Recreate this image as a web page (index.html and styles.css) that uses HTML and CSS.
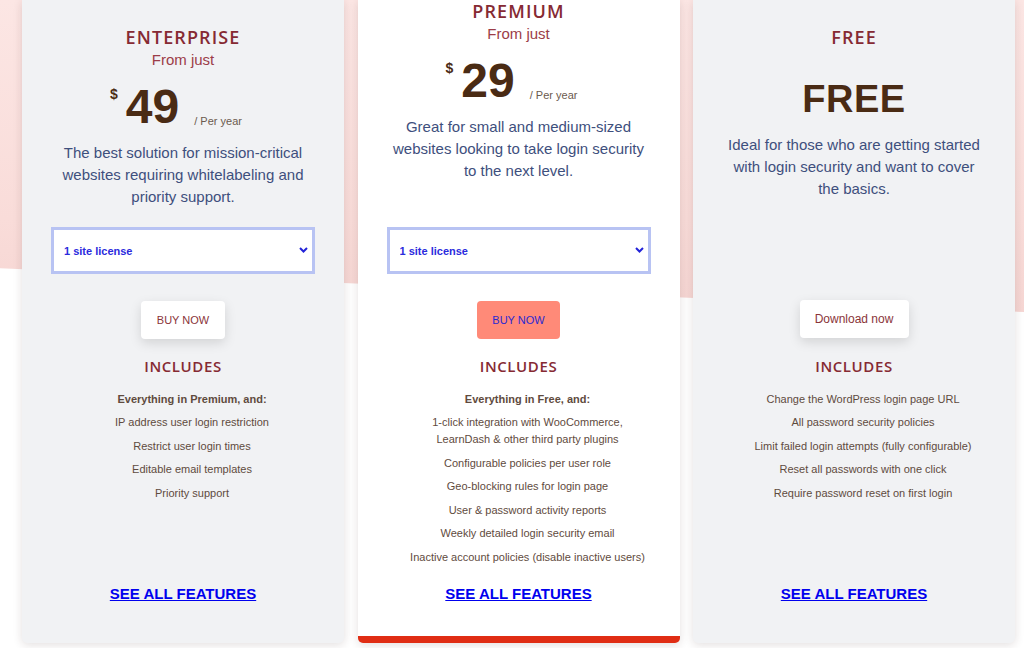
FILE: index.html
```html
<!DOCTYPE html>
<html lang="en">
<head>
<meta charset="utf-8">
<title>Pricing</title>
<link rel="stylesheet" href="styles.css">
</head>
<body>
<div class="pricing">
  <div class="card">
    <div class="head">
      <h2 class="plan">ENTERPRISE</h2>
      <div class="from">From just</div>
      <div class="price"><span class="cur">$</span><span class="amount">49</span><span class="per">/ Per year</span></div>
      <p class="desc">The best solution for mission-critical websites requiring whitelabeling and priority support.</p>
    </div>
    <div class="license">
      <div class="select-wrap">
        <select class="select"><option>1 site license</option></select>
        <svg class="chev" width="9" height="6" viewBox="0 0 9 6"><path d="M1 1l3.5 3.5L8 1" fill="none" stroke="#2323d8" stroke-width="2"/></svg>
      </div>
    </div>
    <div class="btn-row"><a class="btn">BUY NOW</a></div>
    <h3 class="includes">INCLUDES</h3>
    <ul class="features">
      <li class="lead">Everything in Premium, and:</li>
      <li>IP address user login restriction</li>
      <li>Restrict user login times</li>
      <li>Editable email templates</li>
      <li>Priority support</li>
    </ul>
    <div class="foot"><a class="all" href="#">SEE ALL FEATURES</a></div>
  </div>

  <div class="card featured">
    <div class="head">
      <h2 class="plan">PREMIUM</h2>
      <div class="from">From just</div>
      <div class="price"><span class="cur">$</span><span class="amount">29</span><span class="per">/ Per year</span></div>
      <p class="desc">Great for small and medium-sized websites looking to take login security to the next level.</p>
    </div>
    <div class="license">
      <div class="select-wrap">
        <select class="select"><option>1 site license</option></select>
        <svg class="chev" width="9" height="6" viewBox="0 0 9 6"><path d="M1 1l3.5 3.5L8 1" fill="none" stroke="#2323d8" stroke-width="2"/></svg>
      </div>
    </div>
    <div class="btn-row"><a class="btn btn-hot">BUY NOW</a></div>
    <h3 class="includes">INCLUDES</h3>
    <ul class="features">
      <li class="lead">Everything in Free, and:</li>
      <li>1-click integration with WooCommerce, LearnDash &amp; other third party plugins</li>
      <li>Configurable policies per user role</li>
      <li>Geo-blocking rules for login page</li>
      <li>User &amp; password activity reports</li>
      <li>Weekly detailed login security email</li>
      <li>Inactive account policies (disable inactive users)</li>
    </ul>
    <div class="foot"><a class="all" href="#">SEE ALL FEATURES</a></div>
  </div>

  <div class="card">
    <div class="head">
      <h2 class="plan">FREE</h2>
      <div class="free">FREE</div>
      <p class="desc desc-free">Ideal for those who are getting started with login security and want to cover the basics.</p>
    </div>
    <div class="license"></div>
    <div class="btn-row"><a class="btn btn-dl">Download now</a></div>
    <h3 class="includes">INCLUDES</h3>
    <ul class="features">
      <li>Change the WordPress login page URL</li>
      <li>All password security policies</li>
      <li>Limit failed login attempts (fully configurable)</li>
      <li>Reset all passwords with one click</li>
      <li>Require password reset on first login</li>
    </ul>
    <div class="foot"><a class="all" href="#">SEE ALL FEATURES</a></div>
  </div>
</div>
</body>
</html>
```

FILE: styles.css
```css
* { box-sizing: border-box; }

html, body {
  margin: 0;
  padding: 0;
  background: #ffffff;
  font-family: "Liberation Sans", Arial, sans-serif;
}

body {
  width: 1024px;
  height: 648px;
  overflow: hidden;
}

.pricing {
  position: relative;
  display: flex;
  gap: 13.5px;
  padding-left: 22px;
  height: 648px;
  align-items: flex-start;
}

.pricing::before {
  content: "";
  position: absolute;
  top: 0;
  left: 0;
  right: 0;
  height: 312px;
  background: linear-gradient(180deg, #fce6e4 0%, #f9dcd9 70%, #f6d6d3 100%);
  clip-path: polygon(0 0, 100% 0, 100% 100%, 0 86%);
  z-index: 0;
}

.card {
  position: relative;
  z-index: 1;
  width: 322px;
  height: 643px;
  flex: 0 0 322px;
  background: #f1f2f4;
  border-radius: 0 0 5px 5px;
  box-shadow: 0 2px 10px rgba(60, 30, 30, 0.14);
  display: flex;
  flex-direction: column;
  text-align: center;
  padding-bottom: 39px;
}

.card.featured {
  background: #ffffff;
  border-bottom: 7px solid #e02d14;
  padding-bottom: 32px;
}

.head {
  height: 227px;
  padding: 26px 30px 0;
}

.featured .head { padding-top: 0; }

.plan {
  margin: 0;
  font-family: "Open Sans", sans-serif;
  font-weight: 600;
  font-size: 18px;
  line-height: 22px;
  letter-spacing: 1.1px;
  color: #862a33;
}

.from {
  margin-top: 3px;
  font-size: 15px;
  line-height: 18px;
  color: #9c3d48;
}

.price {
  margin-top: 10px;
  height: 56px;
  display: flex;
  justify-content: center;
  align-items: flex-start;
  padding-right: 14px;
  color: #4a2b14;
}

.cur {
  font-size: 14px;
  font-weight: 700;
  line-height: 14px;
  margin-top: 8px;
  margin-right: 8px;
}

.amount {
  font-size: 48px;
  font-weight: 700;
  line-height: 56px;
}

.per {
  align-self: flex-end;
  font-size: 11px;
  line-height: 12px;
  margin-left: 15px;
  margin-bottom: 8px;
  color: #6b5a4e;
}

.desc {
  margin: 7px 0 0;
  font-size: 15px;
  line-height: 22px;
  color: #3e4f7d;
}

.free {
  margin-top: 29px;
  font-size: 38px;
  font-weight: 700;
  line-height: 44px;
  color: #4a2b14;
  letter-spacing: 0.5px;
}

.desc-free { margin-top: 13px; }

.license {
  height: 74px;
  padding: 0 29px;
}

.select-wrap {
  position: relative;
  height: 47px;
}

.select {
  display: block;
  width: 100%;
  height: 47px;
  margin: 0;
  border: 3px solid #b8c3f3;
  border-radius: 0;
  background: #ffffff;
  appearance: none;
  -webkit-appearance: none;
  padding: 0 24px 0 10px;
  font-family: "Liberation Sans", Arial, sans-serif;
  font-size: 11px;
  font-weight: 700;
  color: #2b2bdd;
  outline: none;
}

.chev {
  position: absolute;
  right: 7px;
  top: 20px;
}

.btn-row {
  display: flex;
  justify-content: center;
}

.btn {
  display: flex;
  align-items: center;
  justify-content: center;
  height: 38px;
  width: 84px;
  background: #ffffff;
  border-radius: 4px;
  box-shadow: 0 4px 12px rgba(0, 0, 0, 0.13);
  font-size: 11px;
  color: #8a3439;
  cursor: pointer;
}

.btn-hot {
  width: 83px;
  background: #ff8a78;
  box-shadow: none;
  color: #2a29d2;
}

.btn-dl {
  width: 109px;
  font-size: 12px;
  margin-top: -1px;
  margin-bottom: 1px;
}

.includes {
  margin: 17px 0 0;
  font-family: "Open Sans", sans-serif;
  font-weight: 600;
  font-size: 15px;
  line-height: 20px;
  letter-spacing: 0.6px;
  color: #862a33;
}

.features {
  list-style: none;
  margin: 14.5px auto 0;
  padding: 0 0 0 18px;
  width: 260px;
  font-size: 11px;
  line-height: 17px;
  color: #5f4b3e;
}

.features li { margin-bottom: 6.5px; }

.features .lead { font-weight: 700; }

.foot {
  margin-top: auto;
}

.all {
  font-size: 15px;
  font-weight: 700;
  line-height: 20px;
  color: #0000ee;
  text-decoration: underline;
  letter-spacing: 0;
}
```
